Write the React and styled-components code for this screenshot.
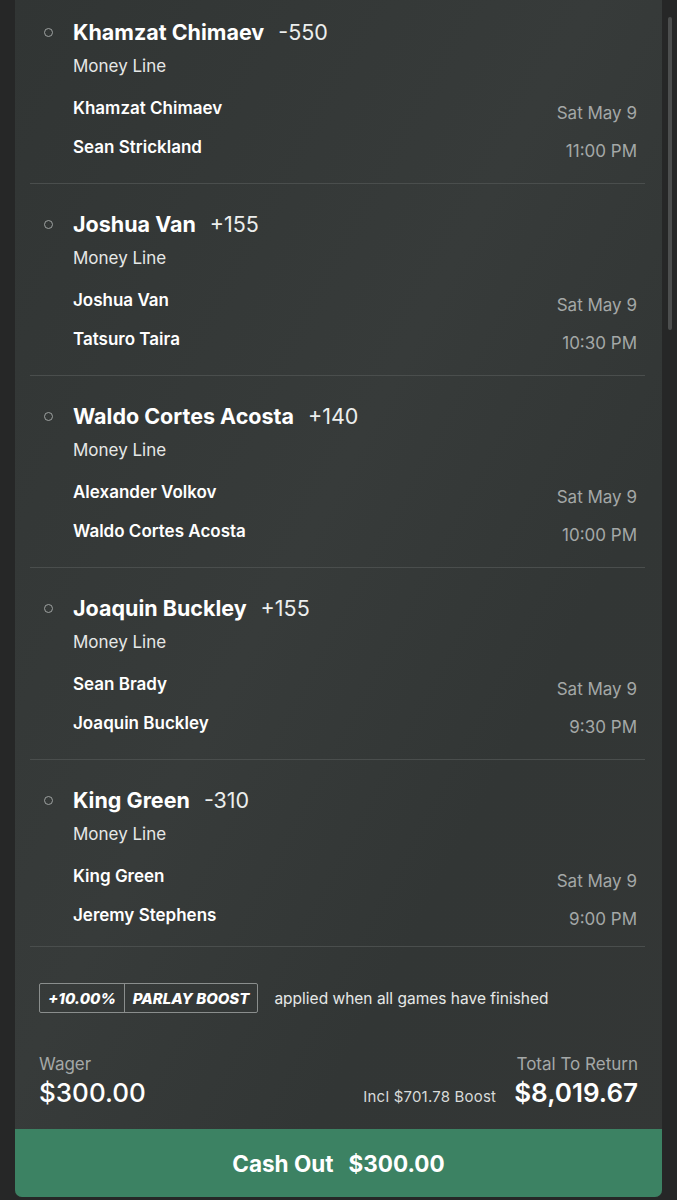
import React from "react";
import styled, { createGlobalStyle } from "styled-components";

const GlobalStyle = createGlobalStyle`
  html, body {
    margin: 0;
    padding: 0;
    background: #262727;
    font-family: Inter, "Noto Sans", "Liberation Sans", sans-serif;
    -webkit-font-smoothing: antialiased;
  }
`;

const Page = styled.div`
  position: relative;
  width: 677px;
  height: 1200px;
  overflow: hidden;
  background: #262727;
`;

const Card = styled.div`
  margin: 0 15px;
  height: 1197px;
  display: flex;
  flex-direction: column;
  background: linear-gradient(118deg, #313534 0%, #373b3a 45%, #323635 70%, #343736 100%);
  border-radius: 0 0 7px 7px;
  overflow: hidden;
`;

const Legs = styled.div`
  margin: 0 17px 0 15px;
`;

const Leg = styled.div`
  display: grid;
  grid-template-columns: 43px 1fr auto;
  padding: 27px 8px 25px 0;
  border-bottom: 1px solid #4a4e4d;

  &:first-child {
    padding-top: 19px;
  }
  &:last-child {
    padding-bottom: 20px;
  }
`;

const Bullet = styled.span`
  width: 7px;
  height: 7px;
  margin: 9px 0 0 14px;
  border: 1.5px solid #9ea2a1;
  border-radius: 50%;
`;

const Main = styled.div`
  display: flex;
  flex-direction: column;
  color: #fff;
`;

const Title = styled.div`
  display: flex;
  align-items: baseline;
  gap: 14px;
  font-size: 21.5px;
  line-height: 26px;
`;

const Pick = styled.span`
  font-weight: 700;
`;

const Odds = styled.span`
  font-weight: 400;
  color: #eceeed;
`;

const Market = styled.div`
  margin: 10px 0 20px;
  font-size: 17px;
  line-height: 22px;
  color: #e6e8e7;
`;

const Fighters = styled.div`
  display: flex;
  flex-direction: column;
  gap: 17px;
`;

const Fighter = styled.div`
  font-size: 17px;
  line-height: 22px;
  font-weight: 600;
`;

const When = styled.div`
  align-self: end;
  display: flex;
  flex-direction: column;
  align-items: flex-end;
  gap: 16px;
  margin-bottom: -4px;
  font-size: 17px;
  line-height: 22px;
  color: #a4a8a7;
`;

const Footer = styled.div`
  display: flex;
  flex-direction: column;
  padding: 36px 24px 0;
`;

const BoostRow = styled.div`
  display: flex;
  align-items: center;
  gap: 16px;
`;

const BoostBox = styled.div`
  display: flex;
  height: 28px;
  border: 1px solid #8a8e8d;
  border-radius: 2px;
`;

const BoostCell = styled.span`
  display: flex;
  align-items: center;
  padding: 0 8px;
  font-size: 15px;
  font-weight: 800;
  font-style: italic;
  color: #fff;
  & + & {
    border-left: 1px solid #8a8e8d;
  }
`;

const BoostNote = styled.span`
  font-size: 15.5px;
  color: #e6e8e7;
`;

const Totals = styled.div`
  display: flex;
  justify-content: space-between;
  align-items: flex-end;
  margin-top: 40px;
`;

const Col = styled.div`
  display: flex;
  flex-direction: column;
  align-items: ${(p) => (p.$right ? "flex-end" : "flex-start")};
  gap: 2px;
`;

const Label = styled.div`
  font-size: 17px;
  line-height: 22px;
  color: #a4a8a7;
`;

const AmountRow = styled.div`
  display: flex;
  align-items: baseline;
  gap: 18px;
`;

const Amount = styled.div`
  font-size: 26px;
  line-height: 32px;
  font-weight: ${(p) => (p.$bold ? 600 : 500)};
  color: #fff;
`;

const Incl = styled.span`
  font-size: 15px;
  letter-spacing: 0.2px;
  color: #d8dbda;
`;

const CashOut = styled.button`
  display: flex;
  justify-content: center;
  align-items: center;
  gap: 15px;
  height: 68px;
  margin-top: auto;
  flex-shrink: 0;
  border: 0;
  background: #3c8263;
  color: #fff;
  font-family: inherit;
  font-size: 22.5px;
  font-weight: 700;
`;

const Scrollbar = styled.div`
  position: absolute;
  top: 17px;
  left: 668px;
  width: 4px;
  height: 313px;
  border-radius: 2px;
  background: #4c4e4e;
`;

const legs = [
  { pick: "Khamzat Chimaev", odds: "-550", a: "Khamzat Chimaev", b: "Sean Strickland", time: "11:00 PM" },
  { pick: "Joshua Van", odds: "+155", a: "Joshua Van", b: "Tatsuro Taira", time: "10:30 PM" },
  { pick: "Waldo Cortes Acosta", odds: "+140", a: "Alexander Volkov", b: "Waldo Cortes Acosta", time: "10:00 PM" },
  { pick: "Joaquin Buckley", odds: "+155", a: "Sean Brady", b: "Joaquin Buckley", time: "9:30 PM" },
  { pick: "King Green", odds: "-310", a: "King Green", b: "Jeremy Stephens", time: "9:00 PM" },
];

export default function App() {
  return (
    <Page>
      <GlobalStyle />
      <Card>
        <Legs>
          {legs.map((l) => (
            <Leg key={l.pick}>
              <Bullet />
              <Main>
                <Title>
                  <Pick>{l.pick}</Pick>
                  <Odds>{l.odds}</Odds>
                </Title>
                <Market>Money Line</Market>
                <Fighters>
                  <Fighter>{l.a}</Fighter>
                  <Fighter>{l.b}</Fighter>
                </Fighters>
              </Main>
              <When>
                <span>Sat May 9</span>
                <span>{l.time}</span>
              </When>
            </Leg>
          ))}
        </Legs>
        <Footer>
          <BoostRow>
            <BoostBox>
              <BoostCell>+10.00%</BoostCell>
              <BoostCell>PARLAY BOOST</BoostCell>
            </BoostBox>
            <BoostNote>applied when all games have finished</BoostNote>
          </BoostRow>
          <Totals>
            <Col>
              <Label>Wager</Label>
              <Amount>$300.00</Amount>
            </Col>
            <Col $right>
              <Label>Total To Return</Label>
              <AmountRow>
                <Incl>Incl $701.78 Boost</Incl>
                <Amount $bold>$8,019.67</Amount>
              </AmountRow>
            </Col>
          </Totals>
        </Footer>
        <CashOut>
          <span>Cash Out</span>
          <span>$300.00</span>
        </CashOut>
      </Card>
      <Scrollbar />
    </Page>
  );
}
